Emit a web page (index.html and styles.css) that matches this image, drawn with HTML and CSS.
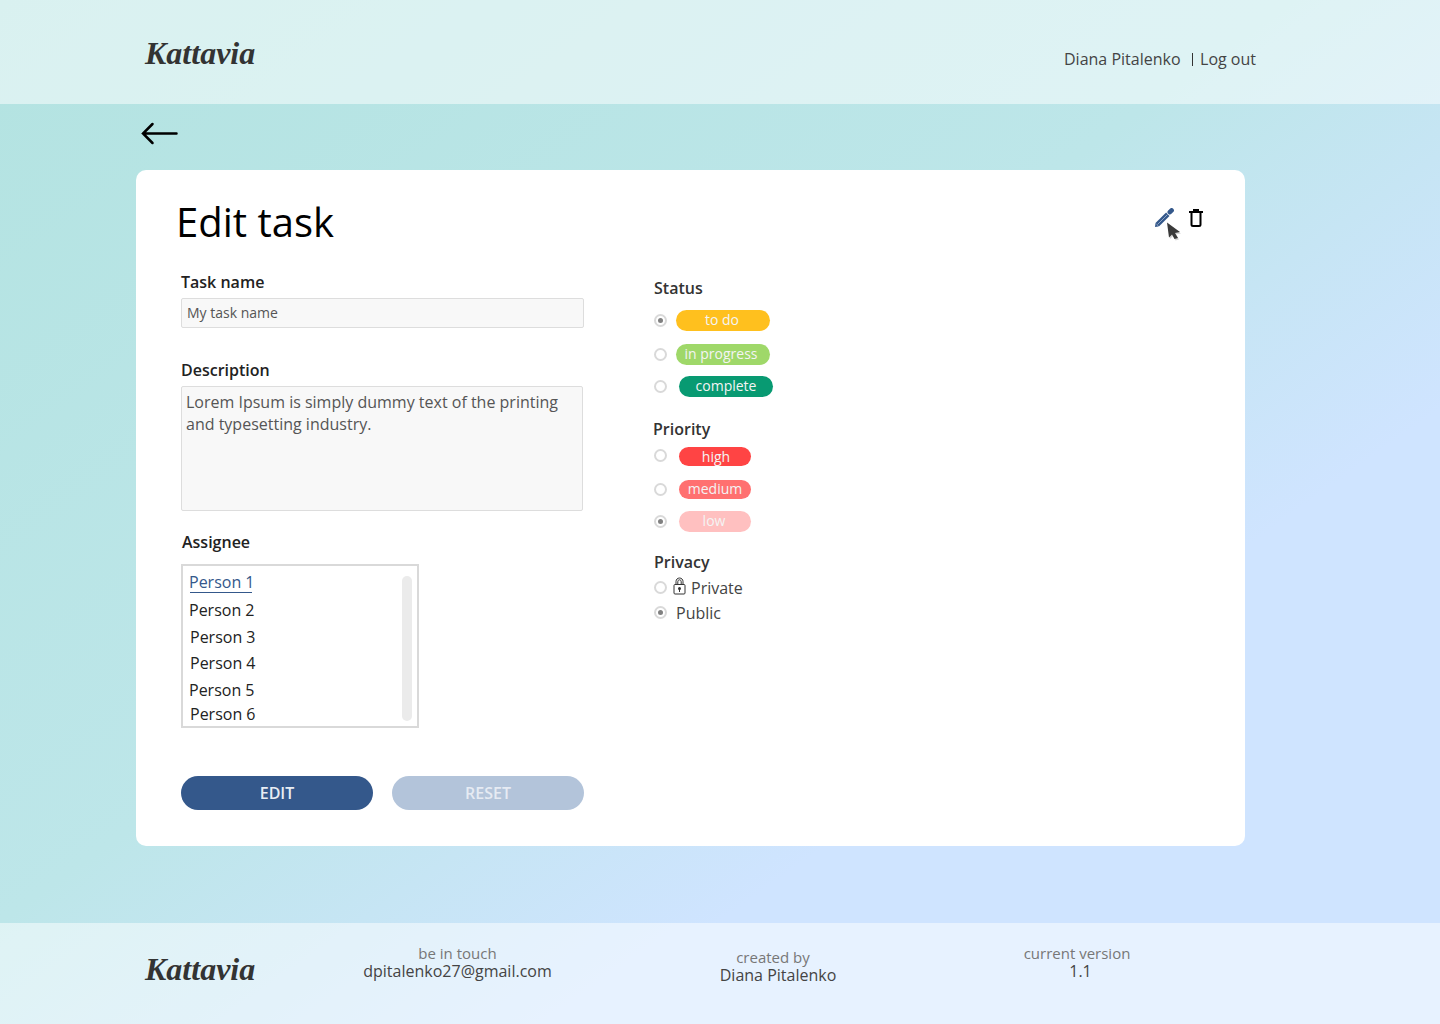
FILE: index.html
```html
<!DOCTYPE html>
<html>
<head>
    <title>Edit task</title>
    <link rel="stylesheet" href="styles.css">
</head>
<body>
<header class="top-bar">
    <div class="logo">Kattavia</div>
    <nav class="user-nav">
        <span>Diana Pitalenko</span>
        <span class="nav-sep"></span>
        <span>Log out</span>
    </nav>
</header>

<main class="page">
    <div class="back-row">
        <svg class="back-arrow" width="38" height="24" viewBox="0 0 38 24">
            <path d="M36.500 12.5H3M12.500 3L3 12.500L12.500 22" fill="none" stroke="#000" stroke-width="2.500" stroke-linecap="round" stroke-linejoin="miter"/>
        </svg>
    </div>

    <section class="card">
        <div class="card-head">
            <h1 class="card-title">Edit task</h1>
            <div class="card-tools">
                <svg class="tool-pencil" width="20" height="20" viewBox="0 0 20 20">
                    <path d="M1 19L1.500 15L4.500 18.500Z" fill="#34588b"/>
                    <path d="M3.200 16.800L13.800 6.200" fill="none" stroke="#34588b" stroke-width="4.800"/>
                    <path d="M3.500 16.500L13.500 6.500" fill="none" stroke="#8ea5c6" stroke-width="1"/>
                    <path d="M15.800 4.200L17.600 2.400" fill="none" stroke="#34588b" stroke-width="4.600" stroke-linecap="round"/>
                </svg>
                <svg class="tool-trash" width="14" height="19" viewBox="0 0 14 19">
                    <path d="M0 4H14M4 2H10" fill="none" stroke="#000" stroke-width="2"/>
                    <path d="M2.500 4V16.500Q2.500 18 4 18H10Q11.500 18 11.500 16.500V4" fill="none" stroke="#000" stroke-width="2"/>
                </svg>
                <svg class="tool-cursor" width="20" height="22" viewBox="0 0 20 22">
                    <path d="M2 1.500L15 11L10 12L13 17L9.500 18L7 13.500L4 16.500Z" fill="#000" opacity=".16" transform="translate(1 1.500)"/>
                    <path d="M2 1.500L15 11L10 12L13 17L9.500 18L7 13.500L4 16.500Z" fill="#3a3a3a"/>
                </svg>
            </div>
        </div>

        <form class="task-form">
            <div class="form-left">
                <label class="field-label">Task name</label>
                <div class="text-input">My task name</div>

                <label class="field-label label-desc">Description</label>
                <div class="text-area">Lorem Ipsum is simply dummy text of the printing and typesetting industry.</div>

                <label class="field-label label-assignee">Assignee</label>
                <div class="assignee-box">
                    <ul class="assignee-list">
                        <li class="person person-active">Person 1</li>
                        <li class="person p2">Person 2</li>
                        <li class="person p3">Person 3</li>
                        <li class="person p4">Person 4</li>
                        <li class="person p5">Person 5</li>
                        <li class="person p6">Person 6</li>
                    </ul>
                    <div class="scroll-track"></div>
                </div>

                <div class="form-buttons">
                    <button type="button" class="btn btn-edit">EDIT</button>
                    <button type="button" class="btn btn-reset">RESET</button>
                </div>
            </div>

            <div class="form-right">
                <div class="group-title">Status</div>
                <div class="opt opt-todo"><span class="radio checked"></span><span class="pill pill-todo">to do</span></div>
                <div class="opt opt-progress"><span class="radio"></span><span class="pill pill-progress">in progress</span></div>
                <div class="opt opt-complete"><span class="radio"></span><span class="pill pill-complete">complete</span></div>

                <div class="group-title title-priority">Priority</div>
                <div class="opt opt-high"><span class="radio"></span><span class="pill pill-high">high</span></div>
                <div class="opt opt-medium"><span class="radio"></span><span class="pill pill-medium">medium</span></div>
                <div class="opt opt-low"><span class="radio checked"></span><span class="pill pill-low">low</span></div>

                <div class="group-title title-privacy">Privacy</div>
                <div class="opt opt-private">
                    <span class="radio"></span>
                    <svg class="lock" width="13" height="18" viewBox="0 0 13 18">
                        <path d="M3 8V4.500C3 2.500 4.500 1 6.500 1S10 2.500 10 4.500V8M4.800 8V4.800C4.800 3.600 5.500 2.800 6.500 2.800S8.200 3.600 8.200 4.800V8" fill="none" stroke="#333" stroke-width="1"/>
                        <rect x="1" y="7.500" width="11" height="9.500" rx="1" fill="#fff" stroke="#333" stroke-width="1"/>
                        <circle cx="6.500" cy="11.500" r="1.500" fill="#333"/>
                        <path d="M6.500 12V15" stroke="#333" stroke-width="1"/>
                    </svg>
                    <span class="opt-text">Private</span>
                </div>
                <div class="opt opt-public"><span class="radio checked"></span><span class="opt-text">Public</span></div>
            </div>
        </form>
    </section>
</main>

<footer class="bottom-bar">
    <div class="logo">Kattavia</div>
    <div class="foot-col foot-touch">
        <div class="foot-small">be in touch</div>
        <div class="foot-big">dpitalenko27@gmail.com</div>
    </div>
    <div class="foot-col foot-created">
        <div class="foot-small foot-small-shift">created by</div>
        <div class="foot-big">Diana Pitalenko</div>
    </div>
    <div class="foot-col foot-version">
        <div class="foot-small">current version</div>
        <div class="foot-big foot-num">1.1</div>
    </div>
</footer>
</body>
</html>
```

FILE: styles.css
```css
* {
    box-sizing: border-box;
}

body {
    margin: 0;
    height: 1024px;
    overflow: hidden;
    display: flex;
    flex-direction: column;
    font-family: "Open Sans", sans-serif;
    color: #333;
    background: linear-gradient(to bottom right, #b3e3e1 0%, #bde6e9 45%, #cfe4ff 70%, #cfe4ff 100%);
}

.top-bar {
    height: 104px;
    flex: none;
    display: flex;
    justify-content: space-between;
    padding: 28px 184px 0 145px;
    background: rgba(255, 255, 255, 0.5);
}

.logo {
    font-family: "Liberation Serif", serif;
    font-style: italic;
    font-weight: bold;
    font-size: 32px;
    line-height: 50px;
    width: 111px;
    white-space: nowrap;
    color: #333;
}

.user-nav {
    display: flex;
    align-items: center;
    height: 62px;
    font-size: 16px;
    color: #444;
}

.nav-sep {
    width: 1.500px;
    height: 13px;
    background: #333;
    margin: 0 7px 0 11px;
}

.page {
    flex: 1;
    padding-left: 136px;
}

.back-row {
    height: 66px;
    padding: 17px 0 0 4px;
}

.back-arrow {
    display: block;
}

.card {
    width: 1109px;
    height: 676px;
    background: #fff;
    border-radius: 10px;
    padding: 0 42px 0 45px;
}

.card-head {
    height: 101px;
    display: flex;
    justify-content: space-between;
    padding-top: 25px;
}

.card-title {
    margin: 0 0 0 -5px;
    font-size: 40px;
    font-weight: 400;
    line-height: 54px;
    color: #000;
}

.card-tools {
    position: relative;
    display: flex;
    gap: 15px;
    padding-top: 13px;
    height: 40px;
}

.tool-pencil, .tool-trash {
    display: block;
}

.tool-cursor {
    position: absolute;
    left: 11px;
    top: 26px;
}

.task-form {
    display: flex;
}

.form-left {
    width: 473px;
}

.field-label {
    display: block;
    font-size: 16px;
    font-weight: 600;
    line-height: 22px;
    color: #222;
}

.text-input {
    width: 403px;
    height: 30px;
    margin-top: 5px;
    padding: 0 5px;
    font-size: 14px;
    line-height: 28px;
    color: #555;
    background: #f8f8f8;
    border: 1px solid #ddd;
    border-radius: 2px;
}

.label-desc {
    margin-top: 31px;
}

.text-area {
    width: 402px;
    height: 125px;
    margin-top: 5px;
    padding: 4px 4px;
    font-size: 16px;
    line-height: 22px;
    color: #555;
    background: #f8f8f8;
    border: 1px solid #ddd;
    border-radius: 2px;
}

.label-assignee {
    margin: 20px 0 0 1px;
}

.assignee-box {
    position: relative;
    width: 238px;
    height: 164px;
    margin-top: 11px;
    border: 2px solid #d9d9d9;
    overflow: hidden;
}

.assignee-list {
    list-style: none;
    margin: 0;
    padding: 6px 0 0 6px;
    font-size: 16px;
    line-height: 22px;
    color: #222;
}

.person-active {
    color: #34588b;
    line-height: 20px;
}

.person-active::after {
    content: "";
    display: block;
    width: 62px;
    height: 1px;
    margin-left: 1px;
    background: #34588b;
}

.p2 {
    margin-top: 6px;
}

.p3 {
    margin: 5px 0 0 1px;
}

.p4 {
    margin: 4px 0 0 1px;
}

.p5 {
    margin-top: 5px;
}

.p6 {
    margin: 2px 0 0 1px;
}

.scroll-track {
    position: absolute;
    right: 5px;
    top: 10px;
    width: 10px;
    height: 145px;
    background: #ebebeb;
    border-radius: 5px;
}

.form-buttons {
    display: flex;
    gap: 19px;
    width: 403px;
    margin-top: 48px;
}

.btn {
    width: 192px;
    height: 34px;
    border: none;
    border-radius: 17px;
    font-family: "Open Sans", sans-serif;
    font-size: 16px;
    font-weight: 600;
    cursor: pointer;
}

.btn-edit {
    background: #34588b;
    color: #e8edf4;
}

.btn-reset {
    background: #b3c4da;
    color: #e6ebf3;
}

.form-right {
    padding-top: 6px;
}

.group-title {
    font-size: 16px;
    font-weight: 600;
    line-height: 22px;
    color: #333;
}

.title-priority {
    margin: 21px 0 0 -1px;
}

.title-privacy {
    margin-top: 19px;
}

.opt {
    display: flex;
    align-items: center;
}

.radio {
    flex: none;
    width: 13px;
    height: 13px;
    border: 2px solid #d9d9d9;
    border-radius: 50%;
    background: #fff;
    display: flex;
    align-items: center;
    justify-content: center;
}

.radio.checked::after {
    content: "";
    width: 5px;
    height: 5px;
    border-radius: 50%;
    background: #808080;
}

.pill {
    width: 94px;
    height: 21px;
    margin-left: 9px;
    border-radius: 10.500px;
    font-size: 14px;
    line-height: 20px;
    text-align: center;
    color: #f4f4f4;
}

.opt-todo {
    margin-top: 11px;
}

.opt-progress {
    margin-top: 13px;
}

.opt-complete {
    margin-top: 11px;
}

.pill-todo {
    padding-right: 2px;
    background: #ffc01e;
}

.pill-progress {
    padding-right: 4px;
    background: #9fd869;
}

.pill-complete {
    margin-left: 12px;
    background: #089a72;
}

.pill-high, .pill-medium, .pill-low {
    width: 72px;
    margin-left: 12px;
}

.pill-high {
    height: 19px;
    margin-top: 2px;
    padding-left: 2px;
    line-height: 19px;
    background: #ff4444;
}

.pill-medium {
    height: 19px;
    line-height: 18px;
    background: #ff7070;
}

.pill-low {
    padding-right: 2px;
    background: #ffc0c0;
}

.opt-high {
    margin-top: 5px;
}

.opt-medium {
    margin-top: 14px;
}

.opt-low {
    margin-top: 12px;
}

.opt-private {
    margin-top: 4px;
}

.opt-public {
    margin-top: 3px;
}

.opt-private .radio, .opt-public .radio {
    margin-top: -2px;
}

.lock {
    margin: -4px 5px 0 6px;
}

.opt-text {
    font-size: 16px;
    line-height: 22px;
    color: #444;
}

.opt-public .opt-text {
    margin-left: 9px;
}

.bottom-bar {
    height: 101px;
    flex: none;
    display: flex;
    padding: 20px 0 0 145px;
    background: rgba(255, 255, 255, 0.5);
}

.bottom-bar .logo {
    margin-top: 1px;
}

.foot-col {
    text-align: center;
    white-space: nowrap;
}

.foot-small {
    font-size: 15px;
    line-height: 19px;
    color: #777;
}

.foot-small-shift {
    padding-right: 10px;
}

.foot-big {
    font-size: 16px;
    line-height: 17px;
    color: #444;
}

.foot-touch {
    width: 189px;
    margin: 1px 0 0 107px;
}

.foot-created {
    width: 118px;
    margin: 5px 0 0 167px;
}

.foot-version {
    width: 108px;
    margin: 1px 0 0 186px;
}

.foot-num {
    padding-left: 7px;
}
```
